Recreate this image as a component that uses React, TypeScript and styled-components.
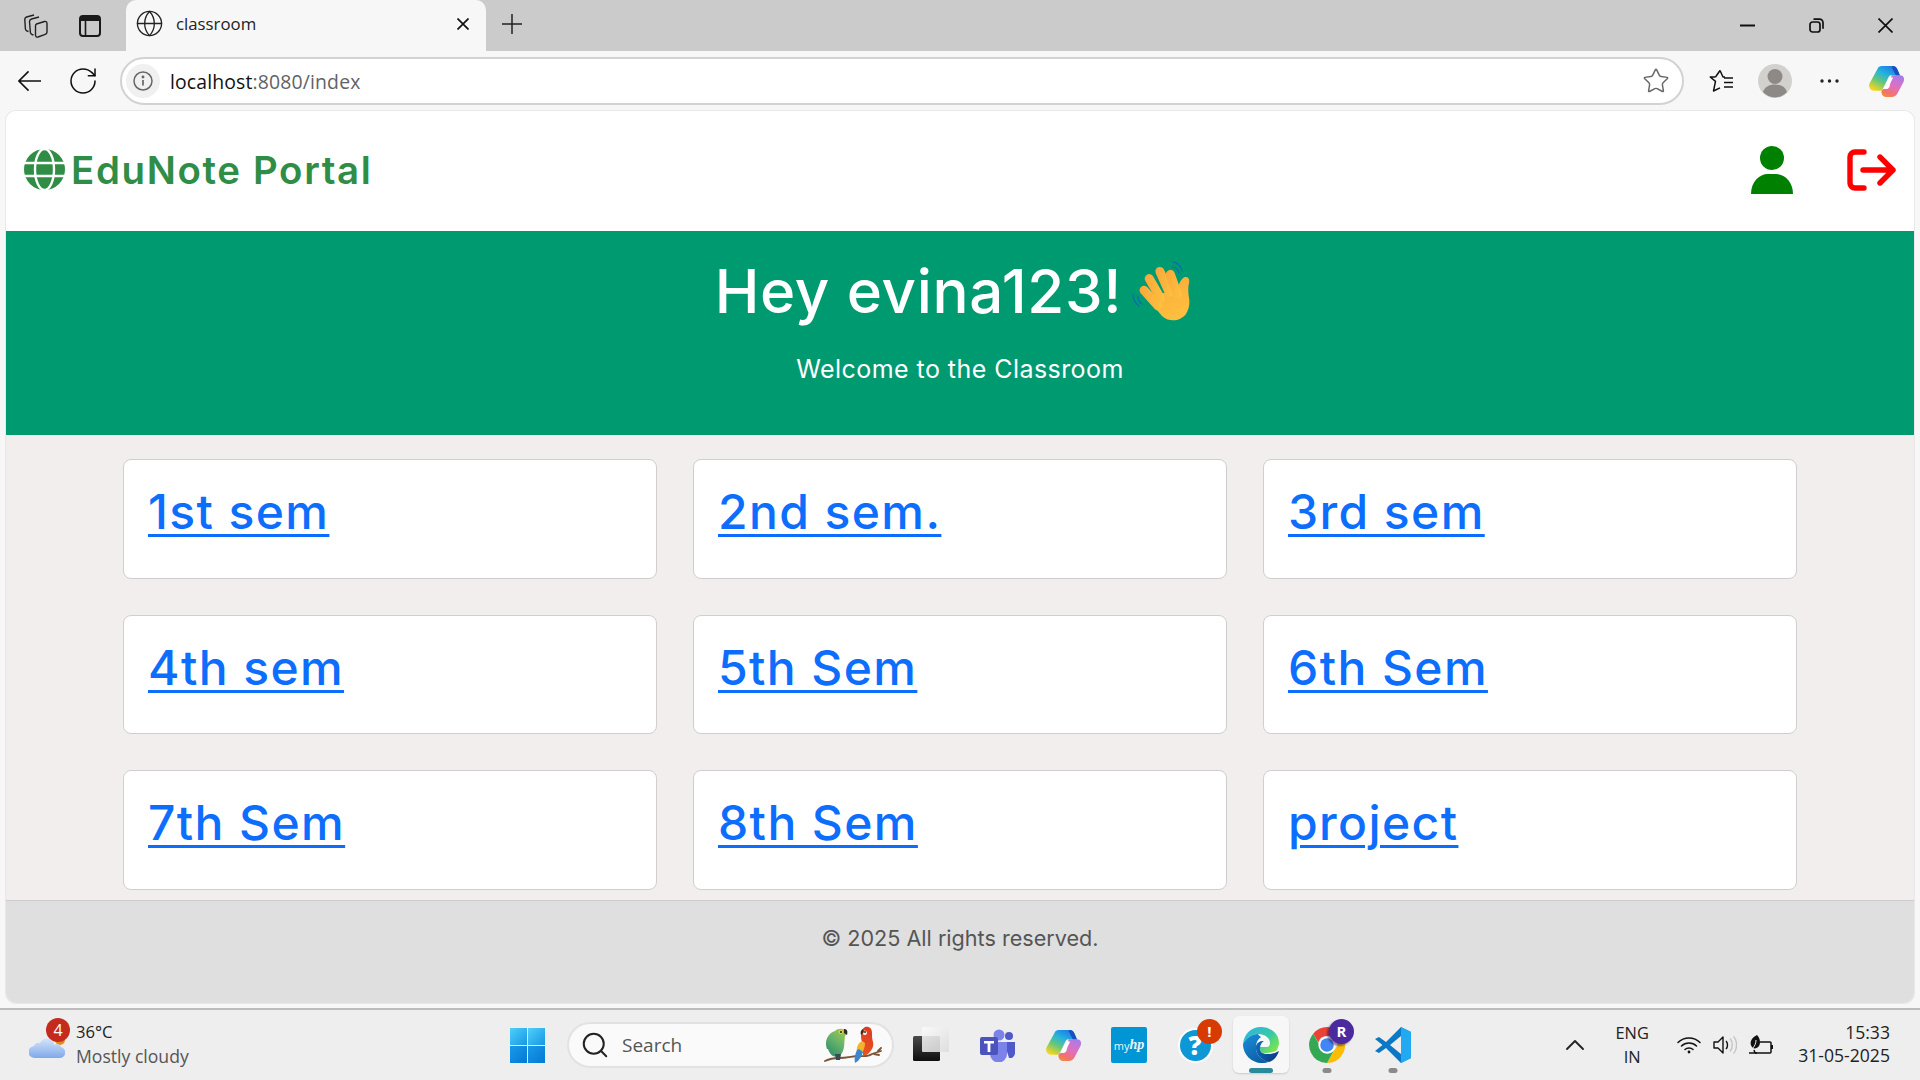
import React from "react";
import styled, { createGlobalStyle } from "styled-components";
import { RotateCw, Globe, Star, Search, ChevronUp } from "lucide-react";

const Global = createGlobalStyle`
  html, body { margin: 0; padding: 0; background: #f7f7f7; }
  * { box-sizing: border-box; }
`;

const Screen = styled.div`
  width: 1920px; height: 1080px; display: flex; flex-direction: column; overflow: hidden;
  background: #f7f7f7; font-family: "Open Sans", "Noto Sans", sans-serif; color: #1a1a1a;
`;
const TabStrip = styled.div`
  height: 51px; flex: none; background: #cbcbcb; display: flex; align-items: stretch; padding-left: 24px;
`;
const StripIcon = styled.div<{ $right: number }>`
  display: flex; align-items: center; margin-right: ${p => p.$right}px; color: #1a1a1a;
`;
const Tab = styled.div`
  width: 360px; background: #f7f7f7; border-radius: 10px 10px 0 0; display: flex; align-items: center;
  padding: 0 17px 4px 9px; gap: 12px; font-size: 16.8px; color: #222;
`;
const TabClose = styled.span`
  margin-left: auto; display: flex;
`;
const NewTab = styled.div`
  display: flex; align-items: center; margin-left: 16px; padding-bottom: 4px;
`;
const WindowControls = styled.div`
  margin-left: auto; display: flex; align-items: center; gap: 54px; padding: 0 27px 1px 0;
`;
const Toolbar = styled.div`
  height: 60px; flex: none; display: flex; align-items: center; padding: 0 16px 0 18px; background: #f7f7f7;
`;
const ToolIcon = styled.div<{ $left: number }>`
  display: flex; flex: none; align-items: center; margin-left: ${p => p.$left}px;
`;
const AddressBar = styled.div`
  width: 1564px; flex: none; height: 48px; margin-left: 21px; border: 2px solid #d2d2d2; border-radius: 24px; background: #fff;
  display: flex; align-items: center; padding: 0 12px 0 4px;
`;
const InfoChip = styled.div`
  width: 34px; height: 34px; border-radius: 50%; background: #f0f0f0; display: flex; align-items: center; justify-content: center;
`;
const Url = styled.div`
  margin-left: 10px; font-size: 19.4px; color: #5f6368; letter-spacing: 0.15px;
  strong { font-weight: 400; color: #111; }
`;
const StarSlot = styled.div`
  margin-left: auto; display: flex; color: #666;
`;

const Page = styled.div`
  height: 892px; flex: none; margin: 0 6px; border-radius: 10px; overflow: hidden; background: #fff;
  display: flex; flex-direction: column; font-family: Inter, "Noto Sans", sans-serif;
  box-shadow: 0 0 0 1px #e8e8e8;
`;
const Header = styled.header`
  height: 120px; flex: none; display: flex; align-items: center; padding: 0 18px 3px 18px; background: #fff;
`;
const Brand = styled.div`
  display: flex; align-items: center; gap: 6px; font-size: 38.4px; font-weight: 600; color: #2f8d46; letter-spacing: 1.65px;
`;
const HeaderActions = styled.div`
  margin-left: auto; display: flex; align-items: center; gap: 54px;
`;
const Banner = styled.section`
  height: 204px; flex: none; background: #009a71; color: #fff; display: flex; flex-direction: column; align-items: center; padding-top: 25px;
`;
const Greeting = styled.h1`
  margin: 0; padding-right: 15px; display: flex; align-items: center; gap: 10px; font-size: 60px; font-weight: 500; line-height: 70px; letter-spacing: 0.7px;
`;
const Welcome = styled.p`
  margin: 27px 0 0; font-size: 25px; line-height: 32px; font-weight: 400; letter-spacing: 0.45px;
`;
const Content = styled.main`
  height: 465px; flex: none; background: #f3eeee; padding-top: 24px;
  display: grid; grid-template-columns: repeat(3, 534px); grid-auto-rows: 119.5px; gap: 36px; justify-content: center;
`;
const Card = styled.div`
  background: #fff; border: 1px solid #cfcfcf; border-radius: 8px; padding: 16px 24px;
`;
const SemLink = styled.a`
  font-size: 48px; line-height: 72px; font-weight: 500; color: #0d6efd; text-decoration: underline; text-underline-offset: 5px; text-decoration-thickness: 3px; letter-spacing: 1.4px;
`;
const Footer = styled.footer`
  height: 103px; flex: none; background: #dfdfdf; border-top: 1px solid #cdcdcd; text-align: center; color: #555;
  font-size: 21.6px; line-height: 30px; padding-top: 22px;
`;

const Taskbar = styled.div`
  margin-top: 5px; height: 72px; flex: none; border-top: 2px solid #bdbdbd; background: #eeeeee; display: flex; align-items: stretch;
`;
const Weather = styled.div`
  width: 510px; flex: none; display: flex; align-items: center; padding-left: 29px; position: relative;
`;
const WeatherBadge = styled.span`
  position: absolute; left: 46px; top: 8px; width: 24px; height: 24px; border-radius: 50%; background: #c42b1c; color: #fff;
  font-size: 16px; display: flex; align-items: center; justify-content: center; line-height: 1;
`;
const WeatherText = styled.div`
  margin-left: 11px; font-size: 16.6px; line-height: 24px; color: #222; margin-top: -3px;
  small { display: block; font-size: 17.6px; color: #555; }
`;
const StartSlot = styled.div`
  width: 57px; flex: none; display: flex; align-items: center;
`;
const SearchBox = styled.div`
  width: 327px; height: 46px; flex: none; align-self: center; border-radius: 23px; background: #fafafa; border: 2px solid #e2e2e2;
  display: flex; align-items: center; padding: 0 8px 0 11px; font-size: 19px; color: #555; gap: 12px;
`;
const SearchArt = styled.div`
  margin-left: auto; display: flex;
`;
const Apps = styled.div`
  display: flex; margin-left: 4px;
`;
const AppSlot = styled.div<{ $active?: boolean }>`
  width: 66px; position: relative; display: flex; align-items: center; justify-content: center;
  &::before {
    content: ""; position: absolute; left: 5px; right: 5px; top: 6px; bottom: 7px; border-radius: 6px;
    background: ${p => (p.$active ? "#f7f7f7" : "transparent")};
    box-shadow: ${p => (p.$active ? "0 1px 2px rgba(0,0,0,.15)" : "none")};
  }
  > * { position: relative; }
`;
const RunDot = styled.span<{ $active?: boolean }>`
  position: absolute !important; bottom: 7px; left: 50%; transform: translateX(-50%); height: 5px; border-radius: 3px;
  width: ${p => (p.$active ? 24 : 9)}px; background: ${p => (p.$active ? "#2a8a9a" : "#8a8a8a")};
`;
const AppBadge = styled.span<{ $bg: string; $shadow?: boolean }>`
  position: absolute !important; top: 9px; left: 35px; width: 25px; height: 25px; border-radius: 50%; background: ${p => p.$bg};
  color: #fff; font-size: 15px; font-weight: 700; display: flex; align-items: center; justify-content: center; line-height: 1;
  box-shadow: ${p => (p.$shadow ? "-2px 2px 2px rgba(40,20,90,.55)" : "none")};
`;
const MyHp = styled.div`
  width: 36px; height: 36px; background: #0096d6; border-radius: 2px; color: #eaf6fc; font-size: 11px; display: flex; align-items: center; justify-content: center;
  i { font-size: 14px; font-weight: 700; font-family: "Liberation Serif", serif; }
`;
const Help = styled.div`
  width: 35px; height: 35px; border-radius: 50%; background: #0e97d6; border: 2px solid #fff; color: #fff; font-size: 26px; font-weight: 800;
  display: flex; align-items: center; justify-content: center; line-height: 1;
`;
const Tray = styled.div`
  margin-left: auto; display: flex; align-items: center; padding-right: 30px;
`;
const Lang = styled.div`
  width: 34px; margin-left: 24px; text-align: center; font-size: 16.4px; line-height: 24px; color: #222; white-space: nowrap; display: flex; flex-direction: column; align-items: center;
`;
const TrayIcons = styled.div`
  display: flex; align-items: center; gap: 12px; margin-left: 28px;
`;
const Clock = styled.div`
  margin-left: 25px; text-align: right; font-size: 17.6px; line-height: 23px; color: #222; margin-top: -2px;
`;

const LogoGlobe = () => (
  <svg width="41" height="41" viewBox="0 0 41 41">
    <circle cx="20.5" cy="20.5" r="20.5" fill="#2f8d46" />
    <g fill="none" stroke="#fff" strokeWidth="2.4">
      <ellipse cx="20.5" cy="20.5" rx="9.5" ry="20.5" />
      <path d="M0 14h41M0 27h41" />
    </g>
  </svg>
);
const UserIcon = () => (
  <svg width="42" height="48" viewBox="0 0 42 48">
    <circle cx="21" cy="12" r="12" fill="#008000" />
    <path d="M0 48c0-12 8-20 17-20h8c9 0 17 8 17 20z" fill="#008000" />
  </svg>
);
const LogoutIcon = () => (
  <svg width="49" height="42" viewBox="0 0 49 42" fill="none" stroke="#ff0000" strokeWidth="5.4" strokeLinecap="round" strokeLinejoin="round">
    <path d="M17 3H8a5 5 0 0 0-5 5v26a5 5 0 0 0 5 5h9" />
    <path d="M16 21h30M33 8l13 13-13 13" />
  </svg>
);
const TabGroups = () => (
  <svg width="24" height="24" viewBox="0 0 24 24" fill="none" stroke="#222" strokeWidth="1.4" strokeLinejoin="round">
    <path d="M12.500 10 20.500 7.500C22 7 23 8 23 9.500V18c0 1.200-.6 2-1.800 2.400L14 23c-1.500.4-2.500-.4-2.500-2V12c0-1 .2-1.700 1-2z" />
    <path d="M9.500 21 8 20.500c-1-.4-1.500-1-1.600-2L5.500 7.500c0-1.500.5-2 2-2.500L15 3" />
    <path d="M4.500 17.500 3 17c-1-.4-1.500-1-1.600-2L.8 5.500C.7 4 1.200 3.500 2.500 3L10 1" />
  </svg>
);
const VerticalTabs = () => (
  <svg width="22" height="22" viewBox="0 0 22 22">
    <rect x="1" y="1" width="20" height="20" rx="3" fill="none" stroke="#1a1a1a" strokeWidth="2" />
    <path d="M1 4a3 3 0 0 1 3-3h14a3 3 0 0 1 3 3v2H1z" fill="#1a1a1a" />
    <path d="M6.500 6v15" stroke="#1a1a1a" strokeWidth="1.600" />
  </svg>
);
const CloseGlyph = ({ size, stroke }: { size: number; stroke: number }) => (
  <svg width={size} height={size} viewBox={`0 0 ${size} ${size}`} stroke="#111" strokeWidth={stroke} fill="none">
    <path d={`M.5 .5L${size - 0.5} ${size - 0.5}M${size - 0.5} .5L.5 ${size - 0.5}`} />
  </svg>
);
const PlusGlyph = () => (
  <svg width="20" height="20" viewBox="0 0 20 20" stroke="#222" strokeWidth="1.500" fill="none">
    <path d="M10 0v20M0 10h20" />
  </svg>
);
const MinimizeGlyph = () => (
  <svg width="15" height="15" viewBox="0 0 15 15" stroke="#111" strokeWidth="2" fill="none">
    <path d="M0 7.500h15" />
  </svg>
);
const BackArrow = () => (
  <svg width="24" height="22" viewBox="0 0 24 22" stroke="#111" strokeWidth="1.600" fill="none">
    <path d="M24 11H1M11 1 1 11l10 10" />
  </svg>
);
const Restore = () => (
  <svg width="15" height="15" viewBox="0 0 15 15" fill="none" stroke="#111" strokeWidth="1.700">
    <rect x="1" y="4" width="10" height="10" rx="2.500" />
    <path d="M4.500 1.200h6a3.500 3.500 0 0 1 3.500 3.500v6" />
  </svg>
);
const InfoIcon = () => (
  <svg width="20" height="20" viewBox="0 0 20 20" fill="none" stroke="#666" strokeWidth="1.500">
    <circle cx="10" cy="10" r="9" />
    <path d="M10 9v5.500" strokeWidth="1.700" />
    <circle cx="10" cy="6" r=".7" fill="#666" />
  </svg>
);
const FavList = () => (
  <svg width="24" height="24" viewBox="0 0 24 24" fill="none" stroke="#111" strokeWidth="1.500" strokeLinejoin="round">
    <path d="M11 1.500l3 6.500h2M6.500 8H1.200l5.300 4.300L4.500 22l6.500-3.200" />
    <path d="M6.500 8 11 1.500" />
    <path d="M15 9h9M15 13.500h9M15 18h9" />
  </svg>
);
const Avatar = () => (
  <svg width="34" height="34" viewBox="0 0 34 34">
    <circle cx="17" cy="17" r="17" fill="#d3d1ce" />
    <circle cx="17" cy="12.500" r="7.500" fill="#8d8986" />
    <path d="M5 28c1.500-5 6-7.500 12-7.500S27.500 23 29 28a16 16 0 0 1-24 0z" fill="#8d8986" />
  </svg>
);
const Dots = () => (
  <svg width="19" height="4" viewBox="0 0 19 4" fill="#222">
    <circle cx="2" cy="2" r="1.700" /><circle cx="9.500" cy="2" r="1.700" /><circle cx="17" cy="2" r="1.700" />
  </svg>
);
const Copilot = ({ id }: { id: string }) => (
  <svg width="35" height="31" viewBox="0 0 34 30">
    <defs>
      <linearGradient id={id + "a"} x1="0.750" y1="0" x2="0.150" y2="0.950">
        <stop offset="0" stopColor="#1c78e6" /><stop offset=".35" stopColor="#25b2e0" />
        <stop offset=".65" stopColor="#62c77c" /><stop offset="1" stopColor="#f5d51f" />
      </linearGradient>
      <linearGradient id={id + "b"} x1="0.750" y1="0" x2="0.300" y2="1">
        <stop offset="0" stopColor="#a77ce8" /><stop offset=".5" stopColor="#e16fc0" />
        <stop offset=".85" stopColor="#f3726e" /><stop offset="1" stopColor="#f2893f" />
      </linearGradient>
    </defs>
    <path d="M22 9h8c3.500 0 5 3 3.500 6.500L28 26c-1.500 3-3.500 4-6 4h-5c-3 0-6-3-4.500-7l2.500-1h2c1.500 0 2.200-.5 3-2L21.500 11z" fill={`url(#${id}b)`} />
    <path d="M9 1.500C10 .5 11 0 13 0h10c2 0 3.500.8 4.500 3L30 9h-8c-1.500 0-2.500.6-3.200 2L14 21c-1 2-2 3-4 3H6c-4 0-7-3-5.500-7z" fill={`url(#${id}a)`} />
    <path d="M23 0c2 0 3.500.8 4.500 3L30 9h-4L22 1z" fill="#1a4fc0" />
    <path d="M20 11h3.500L18 22h-4z" fill="#fff" />
  </svg>
);
const Wave = () => (
  <svg width="58" height="60" viewBox="0 0 58 60">
    <defs>
      <linearGradient id="hand" x1="0.200" y1="0" x2="0.700" y2="1">
        <stop offset="0" stopColor="#fba73a" /><stop offset="1" stopColor="#fdc13f" />
      </linearGradient>
    </defs>
    <g fill="none" stroke="#0a6bb5" strokeWidth="1.200" strokeLinecap="round">
      <path d="M1 33c0 4 2 9 6 12M6 35c0 3 1 6 4 8" />
      <path d="M40 1c4 0 9 3 10 9M40 6c3 0 6 2 7 6" />
    </g>
    <g fill="url(#hand)">
      <path d="M15 37 30 55c6 6 18 6 24-2 3-5 4-10 3-16-1-7-1-11 0-15 1-4-1-6-3-6-3 0-4 2-6 5l-3 7z" />
      <rect x="8" y="25" width="9" height="30" rx="4.500" transform="rotate(-42 12 30)" />
      <rect x="14" y="13" width="9" height="32" rx="4.500" transform="rotate(-30 18 20)" />
      <rect x="24" y="6" width="9" height="32" rx="4.500" transform="rotate(-24 28 12)" />
      <rect x="34" y="9" width="9" height="30" rx="4.500" transform="rotate(-20 38 14)" />
    </g>
  </svg>
);
const CloudSvg = styled.svg`
  margin-top: 3px;
`;
const WeatherIcon = () => (
  <CloudSvg width="36" height="26" viewBox="0 0 36 26">
    <defs>
      <linearGradient id="cl" x1="0" y1="0" x2="0" y2="1"><stop offset="0" stopColor="#d4e4fa" /><stop offset="1" stopColor="#7fa9e8" /></linearGradient>
    </defs>
    <circle cx="31" cy="6" r="5" fill="#e58a1f" />
    <path d="M6 24a6 6 0 0 1-1-12C6 9 9 8 11 9c1-3 4-4.500 7-4.500 4 0 7 3 7 6.500 2.500-2 6-1 7 2a5.600 5.600 0 0 1-2 11z" fill="url(#cl)" />
  </CloudSvg>
);
const WinLogo = () => (
  <svg width="35" height="35" viewBox="0 0 35 35">
    <defs>
      <linearGradient id="w1" x1="0" y1="0" x2="1" y2="1"><stop offset="0" stopColor="#4fd0f8" /><stop offset="1" stopColor="#1797e6" /></linearGradient>
      <linearGradient id="w2" x1="0" y1="0" x2="1" y2="1"><stop offset="0" stopColor="#1a9ae8" /><stop offset="1" stopColor="#0478d4" /></linearGradient>
    </defs>
    <rect x="0" y="0" width="17" height="17" fill="url(#w1)" /><rect x="18" y="0" width="17" height="17" fill="url(#w1)" />
    <rect x="0" y="18" width="17" height="17" fill="url(#w2)" /><rect x="18" y="18" width="17" height="17" fill="url(#w2)" />
  </svg>
);
const Parrots = () => (
  <svg width="60" height="38" viewBox="0 0 60 38">
    <defs>
      <linearGradient id="pg" x1="0.800" y1="0" x2="0.200" y2="1"><stop offset="0" stopColor="#a3c84e" /><stop offset=".5" stopColor="#62b06c" /><stop offset="1" stopColor="#2f8e64" /></linearGradient>
      <linearGradient id="pr" x1="0.600" y1="0" x2="0.400" y2="1"><stop offset="0" stopColor="#e03a22" /><stop offset="1" stopColor="#e8531e" /></linearGradient>
    </defs>
    <path d="M1 35c4-2 8-3 14-3 8 0 14-2 19-2s10 1 14-2l9-3M50 28l5 1M54 25l3-3" stroke="#7a5537" strokeWidth="1.800" fill="none" strokeLinecap="round" />
    <path d="M3 23C0 15 4 7 11 5c3-3 9-3 11 0 1 2 0 4-1 5-1 6 0 12-3 17-3 4-6 4-9 3-2-1-4-4-5-7z" fill="url(#pg)" />
    <path d="M11 28h6l-1 6h-4z" fill="#3b4a52" />
    <circle cx="17" cy="6" r="2" fill="#e5d24a" /><circle cx="17" cy="6" r="1" fill="#222" />
    <path d="M20 3c3 0 4 2 3 6l-3-2z" fill="#2c2c2c" />
    <g transform="translate(-3 0)">
      <path d="M41 16c-2-6-1-13 3-15 4-1 7 1 7 6 0 3 0 6 1 9 1 4-1 8-4 11-2 2-5 3-6 2z" fill="url(#pr)" />
      <path d="M42 5c2-1 4 0 4 2 0 2-3 3-4 1z" fill="#f4e9d8" />
      <path d="M42 3c-2 1-3 3-2 6l3-3z" fill="#3a2a22" />
      <circle cx="44" cy="6" r=".9" fill="#222" />
      <path d="M41 15c-4 2-6 7-5 11l5 1c2-3 3-7 3-10z" fill="#f1b52c" />
      <path d="M36 24c-2 4-3 9-2 13l3-2 3-4 2-5-4-3z" fill="#3d86cf" />
    </g>
  </svg>
);
const GlassSquares = () => (
  <svg width="36" height="36" viewBox="0 0 36 36">
    <defs>
      <linearGradient id="gd" x1="0" y1="0" x2="0" y2="1"><stop offset="0" stopColor="#4a4a4a" /><stop offset="1" stopColor="#0e0e0e" /></linearGradient>
      <linearGradient id="gl" x1="0" y1="0" x2="1" y2="1"><stop offset="0" stopColor="#fbfbfb" /><stop offset="1" stopColor="#dcdcdc" /></linearGradient>
    </defs>
    <rect x="0" y="9" width="27" height="25" rx="1.500" fill="url(#gd)" />
    <rect x="9" y="0" width="27" height="25" rx="1" fill="url(#gl)" opacity=".88" />
  </svg>
);
const Teams = () => (
  <svg width="35" height="33" viewBox="0 0 35 33">
    <circle cx="19" cy="6" r="5.500" fill="#7b83eb" /><circle cx="29" cy="7" r="4" fill="#5059c9" />
    <path d="M24 13h11v11a5 5 0 0 1-6 5z" fill="#5059c9" />
    <path d="M10 13h17v12a8 8 0 0 1-17 0z" fill="#7b83eb" />
    <rect x="0" y="8" width="18" height="18" rx="2" fill="#4b53bc" />
    <path d="M4 12h10v2.500h-3.600V23H7.600v-8.500H4z" fill="#fff" />
  </svg>
);
const Edge = () => (
  <svg width="36" height="36" viewBox="0 0 36 36">
    <defs>
      <linearGradient id="e1" x1="0.100" y1="0" x2="1" y2="0.700"><stop offset="0" stopColor="#2cb7dd" /><stop offset=".6" stopColor="#38c8a8" /><stop offset="1" stopColor="#78e44f" /></linearGradient>
      <linearGradient id="e2" x1="0" y1="0" x2="0.600" y2="1"><stop offset="0" stopColor="#1a8fd8" /><stop offset="1" stopColor="#0c5fa8" /></linearGradient>
      <linearGradient id="e3" x1="0" y1="0" x2="1" y2="0.400"><stop offset="0" stopColor="#0e6eb8" /><stop offset="1" stopColor="#0b3f8a" /></linearGradient>
    </defs>
    <path d="M18 0C8 0 1 7 0 17c3-6 9-10 15-10 7 0 12 4 12 9 0 2-1 4-3 4h-9c-1 3 2 6 8 6 4 0 8-1 11-3 1-3 2-5 2-7C36 7 28 0 18 0z" fill="url(#e1)" />
    <path d="M0 17C0 28 9 36 19 36c3 0 5-.5 7-1-7-2-14-7-13-16 .3-4 2-7 5-9-2-1-3-3-3-3C9 7 3 11 0 17z" fill="url(#e2)" />
    <path d="M13 19c-1 9 6 14 13 16 4-1 8-5 10-11-3 2-7 3-11 3-6 0-9-3-8-6 0-3 2-6 4-7-5 0-7 2-8 5z" fill="url(#e3)" />
  </svg>
);
const Chrome = () => (
  <svg width="36" height="36" viewBox="0 0 48 48">
    <path d="M24 0a24 24 0 0 1 20.800 12H24a12 12 0 0 0-11.500 8.500L5.600 9A24 24 0 0 1 24 0z" fill="#ea4335" />
    <path d="M44.800 12A24 24 0 0 1 24 48l10.400-18a12 12 0 0 0 0-18z" fill="#fbbc04" />
    <path d="M24 48A24 24 0 0 1 5.600 9l10 18A10 10 0 0 0 34 30z" fill="#34a853" />
    <circle cx="24" cy="24" r="11.500" fill="#fff" /><circle cx="24" cy="24" r="9" fill="#4285f4" />
  </svg>
);
const VsCode = () => (
  <svg width="36" height="36" viewBox="0 0 36 36">
    <path d="M26 0 11 15 4 10l-4 2 7.500 6L0 24l4 2 7-5 15 15 10-5V5zm0 9v18l-11-9z" fill="#0a78c4" />
    <path d="M26 0l10 5v26l-10 5z" fill="#23a9f2" />
  </svg>
);
const Wifi = () => (
  <svg width="24" height="18" viewBox="0 0 24 18" fill="none" stroke="#111" strokeWidth="1.500" strokeLinecap="round">
    <path d="M1 6.500c6-6 16-6 22 0M4.500 10c4-4 11-4 15 0M8 13.500c2-2 6-2 8 0" />
    <circle cx="12" cy="16" r="1.400" fill="#111" stroke="none" />
  </svg>
);
const Speaker = () => (
  <svg width="24" height="20" viewBox="0 0 24 20" fill="none" stroke="#111" strokeWidth="1.400" strokeLinejoin="round">
    <path d="M1 7v6h4l5 5V2L5 7z" />
    <path d="M13 6c2 2 2 6 0 8" />
    <path d="M17 3.500c3 3 3 10 0 13M20.500 1.500c4 4 4 13 0 17" stroke="#c4c4c4" />
  </svg>
);
const Battery = () => (
  <svg width="24" height="20" viewBox="0 0 24 20">
    <path d="M6 18h15a1 1 0 0 0 1-1V8a1 1 0 0 0-1-1H11" fill="none" stroke="#111" strokeWidth="1.500" />
    <rect x="22" y="10" width="2" height="4" fill="#111" />
    <path d="M8 0C2 3 0 8 3 12c1 2 5 2 7-1 2-3 1-8-2-11z" fill="#111" />
    <path d="M7 5c0 3-1 6-4 9" stroke="#eee" strokeWidth="1" fill="none" />
    <path d="M0 18h8M5 15l1 3" stroke="#111" strokeWidth="1.500" />
  </svg>
);

const sems = ["1st sem", "2nd sem.", "3rd sem", "4th sem", "5th Sem", "6th Sem", "7th Sem", "8th Sem", "project"];

export default function App() {
  return (
    <Screen>
      <Global />
      <TabStrip>
        <StripIcon $right={31}><TabGroups /></StripIcon>
        <StripIcon $right={25}><VerticalTabs /></StripIcon>
        <Tab>
          <Globe size={29} strokeWidth={1.1} color="#222" />
          <span>classroom</span>
          <TabClose><CloseGlyph size={12} stroke={1.7} /></TabClose>
        </Tab>
        <NewTab><PlusGlyph /></NewTab>
        <WindowControls>
          <MinimizeGlyph />
          <Restore />
          <CloseGlyph size={15} stroke={1.7} />
        </WindowControls>
      </TabStrip>
      <Toolbar>
        <BackArrow />
        <ToolIcon $left={26}><RotateCw size={32} strokeWidth={1.15} color="#111" /></ToolIcon>
        <AddressBar>
          <InfoChip><InfoIcon /></InfoChip>
          <Url><strong>localhost</strong>:8080/index</Url>
          <StarSlot><Star size={28} strokeWidth={1.25} /></StarSlot>
        </AddressBar>
        <ToolIcon $left={25}><FavList /></ToolIcon>
        <ToolIcon $left={25}><Avatar /></ToolIcon>
        <ToolIcon $left={28}><Dots /></ToolIcon>
        <ToolIcon $left={30}><Copilot id="cp1" /></ToolIcon>
      </Toolbar>
      <Page>
        <Header>
          <Brand><LogoGlobe />EduNote Portal</Brand>
          <HeaderActions><UserIcon /><LogoutIcon /></HeaderActions>
        </Header>
        <Banner>
          <Greeting>Hey evina123! <Wave /></Greeting>
          <Welcome>Welcome to the Classroom</Welcome>
        </Banner>
        <Content>
          {sems.map(s => (
            <Card key={s}><SemLink href="#">{s}</SemLink></Card>
          ))}
        </Content>
        <Footer>© 2025 All rights reserved.</Footer>
      </Page>
      <Taskbar>
        <Weather>
          <WeatherIcon />
          <WeatherBadge>4</WeatherBadge>
          <WeatherText>36°C<small>Mostly cloudy</small></WeatherText>
        </Weather>
        <StartSlot><WinLogo /></StartSlot>
        <SearchBox>
          <Search size={30} strokeWidth={1.6} color="#222" />
          <span>Search</span>
          <SearchArt><Parrots /></SearchArt>
        </SearchBox>
        <Apps>
          <AppSlot><GlassSquares /></AppSlot>
          <AppSlot><Teams /></AppSlot>
          <AppSlot><Copilot id="cp2" /></AppSlot>
          <AppSlot><MyHp>my<i>hp</i></MyHp></AppSlot>
          <AppSlot><Help>?</Help><AppBadge $bg="#d83b01">!</AppBadge></AppSlot>
          <AppSlot $active><Edge /><RunDot $active /></AppSlot>
          <AppSlot><Chrome /><AppBadge $bg="#4b2aa0" $shadow>R</AppBadge><RunDot /></AppSlot>
          <AppSlot><VsCode /><RunDot /></AppSlot>
        </Apps>
        <Tray>
          <ChevronUp size={32} strokeWidth={1.4} color="#222" />
          <Lang><span>ENG</span><span>IN</span></Lang>
          <TrayIcons><Wifi /><Speaker /><Battery /></TrayIcons>
          <Clock>15:33<br />31-05-2025</Clock>
        </Tray>
      </Taskbar>
    </Screen>
  );
}
